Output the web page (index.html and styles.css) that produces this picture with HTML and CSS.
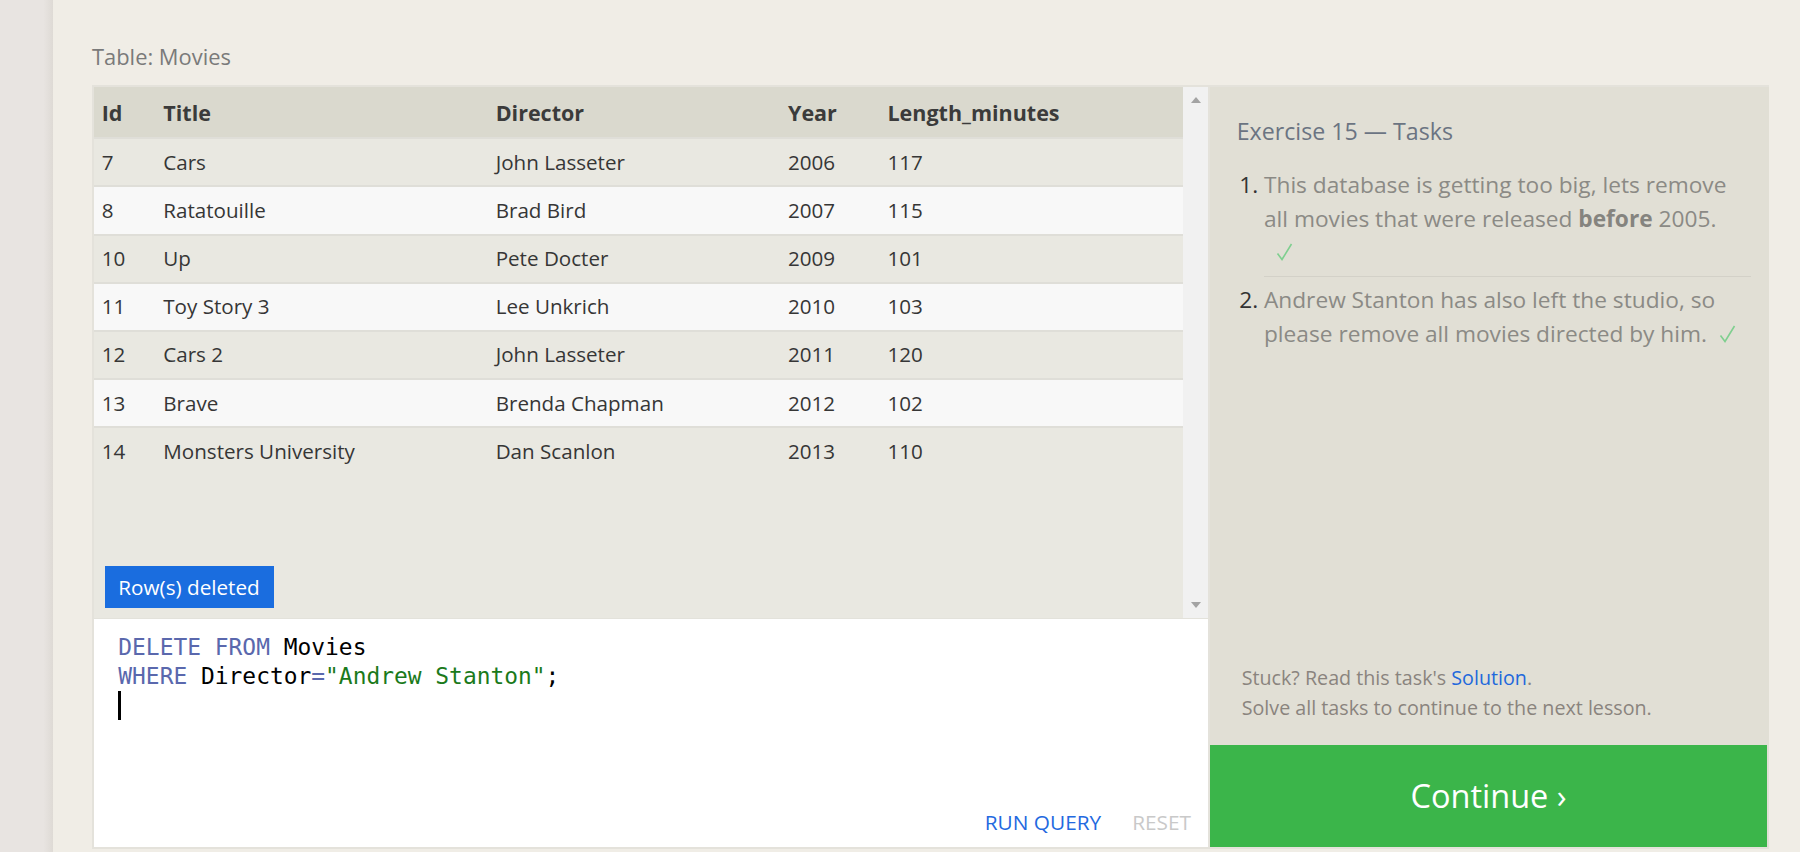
FILE: index.html
```html
<!DOCTYPE html>
<html lang="en">
<head>
<meta charset="utf-8">
<title>SQL Lesson — Exercise 15</title>
<link rel="stylesheet" href="styles.css">
</head>
<body>
  <div class="sidebar"></div>
  <main class="main">
    <div class="table-label">Table: Movies</div>
    <section class="workspace">
      <div class="left">
        <div class="results">
          <div class="results-body">
            <div class="grid">
              <div class="row head">
                <div class="cell">Id</div><div class="cell">Title</div><div class="cell">Director</div><div class="cell">Year</div><div class="cell">Length_minutes</div>
              </div>
              <div class="row odd">
                <div class="cell">7</div><div class="cell">Cars</div><div class="cell">John Lasseter</div><div class="cell">2006</div><div class="cell">117</div>
              </div>
              <div class="row even">
                <div class="cell">8</div><div class="cell">Ratatouille</div><div class="cell">Brad Bird</div><div class="cell">2007</div><div class="cell">115</div>
              </div>
              <div class="row odd">
                <div class="cell">10</div><div class="cell">Up</div><div class="cell">Pete Docter</div><div class="cell">2009</div><div class="cell">101</div>
              </div>
              <div class="row even">
                <div class="cell">11</div><div class="cell">Toy Story 3</div><div class="cell">Lee Unkrich</div><div class="cell">2010</div><div class="cell">103</div>
              </div>
              <div class="row odd">
                <div class="cell">12</div><div class="cell">Cars 2</div><div class="cell">John Lasseter</div><div class="cell">2011</div><div class="cell">120</div>
              </div>
              <div class="row even">
                <div class="cell">13</div><div class="cell">Brave</div><div class="cell">Brenda Chapman</div><div class="cell">2012</div><div class="cell">102</div>
              </div>
              <div class="row odd">
                <div class="cell">14</div><div class="cell">Monsters University</div><div class="cell">Dan Scanlon</div><div class="cell">2013</div><div class="cell">110</div>
              </div>
            </div>
            <div class="status">Row(s) deleted</div>
          </div>
          <div class="scrollbar">
            <span class="arrow up"></span>
            <span class="arrow down"></span>
          </div>
        </div>
        <div class="editor">
          <div class="code">
            <div class="line"><span class="kw">DELETE</span> <span class="kw">FROM</span> Movies</div>
            <div class="line"><span class="kw">WHERE</span> Director<span class="op">=</span><span class="str">"Andrew Stanton"</span>;</div>
            <div class="line"><span class="cursor"></span></div>
          </div>
          <div class="actions">
            <span class="run">RUN QUERY</span>
            <span class="reset">RESET</span>
          </div>
        </div>
      </div>
      <aside class="tasks">
        <div class="tasks-inner">
          <h2 class="tasks-title">Exercise 15 — Tasks</h2>
          <ol class="task-list">
            <li>This database is getting too big, lets remove all movies that were released <b>before</b>&nbsp;2005.<span class="check wrap"><svg width="17" height="18" viewBox="0 0 17 18"><polyline points="1.5,10.5 6,16.5 15.5,1" fill="none" stroke="#7fcf8f" stroke-width="1.6"/></svg></span></li>
            <li>Andrew Stanton has also left the studio, so please remove all movies directed by him.<span class="check"><svg width="17" height="18" viewBox="0 0 17 18"><polyline points="1.5,10.5 6,16.5 15.5,1" fill="none" stroke="#7fcf8f" stroke-width="1.6"/></svg></span></li>
          </ol>
        </div>
        <div class="stuck">
          <div>Stuck? Read this task's <span class="link">Solution</span>.</div>
          <div>Solve all tasks to continue to the next lesson.</div>
        </div>
        <div class="continue">Continue ›</div>
      </aside>
    </section>
  </main>
</body>
</html>
```

FILE: styles.css
```css
html, body {
  margin: 0;
  padding: 0;
}

body {
  display: flex;
  height: 852px;
  overflow: hidden;
  background: #f0ede6;
  font-family: "Open Sans", "Noto Sans", sans-serif;
  color: #3a3a3a;
}

.sidebar {
  flex: none;
  width: 53px;
  background: linear-gradient(to right, #e8e4e1 0, #e8e4e1 82%, #dedad5 100%);
}

.main {
  flex: 1;
  padding: 41.5px 31px 0 39px;
  min-width: 0;
}

.table-label {
  font-size: 21.9px;
  line-height: 30px;
  color: #7a7a7a;
  margin-bottom: 13.5px;
}

.workspace {
  display: flex;
  height: 764px;
  box-sizing: border-box;
  border: 2px solid #e4e2db;
  border-right: 0;
}

.left {
  flex: none;
  width: 1116px;
  box-sizing: border-box;
  border-right: 2px solid #e4e2db;
  display: flex;
  flex-direction: column;
}

.results {
  flex: none;
  height: 531.3px;
  display: flex;
}

.results-body {
  flex: 1;
  background: #e9e8e1;
  display: flex;
  flex-direction: column;
}

.row {
  display: grid;
  grid-template-columns: 61.6px 332.4px 292.3px 99.5px 1fr;
  align-items: center;
  box-sizing: border-box;
}

.cell {
  padding-left: 7.7px;
  white-space: nowrap;
}

.row.head {
  height: 50.3px;
  background: #dad9ce;
  font-weight: 700;
  font-size: 21.5px;
  color: #3b3b3b;
}

.row.odd,
.row.even {
  height: 48.2px;
  padding-bottom: 1.6px;
  border-top: 2px solid #dfded8;
  font-size: 20.6px;
  color: #363636;
}

.row.odd { background: #e9e8e1; }
.row.even { background: #f8f8f8; }

.status {
  margin-top: auto;
  margin-left: 11px;
  margin-bottom: 10.6px;
  align-self: flex-start;
  background: #1a6ddf;
  color: #fff;
  font-size: 20.7px;
  line-height: 28.2px;
  padding: 6.75px 14px 6.75px 13.3px;
}

.scrollbar {
  flex: none;
  width: 25px;
  background: #f1f1f1;
  display: flex;
  flex-direction: column;
  justify-content: space-between;
  align-items: center;
  padding: 10.3px 0 10.6px;
  box-sizing: border-box;
}

.arrow {
  width: 0;
  height: 0;
  border-left: 5.5px solid transparent;
  border-right: 5.5px solid transparent;
}

.arrow.up { border-bottom: 6px solid #a3a3a3; }
.arrow.down { border-top: 6px solid #a3a3a3; }

.editor {
  flex: 1;
  background: #fff;
  border-top: 1px solid #e3e2db;
  display: flex;
  flex-direction: column;
}

.code {
  padding: 13.3px 0 0 24.3px;
  font-family: "DejaVu Sans Mono", "Liberation Mono", monospace;
  font-size: 22.9px;
  line-height: 29px;
  color: #000;
}

.line {
  height: 29px;
  white-space: pre;
}

.kw { color: #5a68ad; }
.op { color: #5a68ad; }
.str { color: #1b7a1b; }

.cursor {
  display: inline-block;
  width: 2.6px;
  height: 29px;
  background: #000;
  vertical-align: top;
}

.actions {
  margin-top: auto;
  display: flex;
  justify-content: flex-end;
  gap: 31px;
  padding: 0 17px 11.3px 0;
  font-size: 20.8px;
}

.run { color: #2369e0; }
.reset { color: #c9c9c9; }

.tasks {
  flex: 1;
  background: #e1dfd5;
  display: flex;
  flex-direction: column;
}

.tasks-inner {
  padding: 28.9px 18px 0 26.7px;
}

.tasks-title {
  margin: 0;
  font-size: 23.2px;
  font-weight: 400;
  line-height: 31.6px;
  color: #6b7482;
}

.task-list {
  margin: 15px 0 0;
  padding-left: 27.3px;
  font-size: 22.7px;
  line-height: 33.3px;
  color: #8b8a85;
}

.task-list li {
  padding: 6px 0 8px;
}

.task-list li + li {
  border-top: 1px solid #d3d1c8;
}

.task-list li::marker {
  color: #333;
}

.task-list b {
  color: #85847f;
}

.check {
  display: inline-block;
  margin-left: 12px;
  vertical-align: baseline;
}

.check.wrap {
  display: block;
}

.check svg {
  display: inline-block;
  vertical-align: -1px;
}

.stuck {
  margin-top: auto;
  padding: 0 0 22px 31.7px;
  font-size: 19.7px;
  line-height: 29.7px;
  color: #8a847e;
}

.link { color: #2168dc; }

.continue {
  flex: none;
  height: 102.3px;
  margin-right: 2px;
  background: #3bb54a;
  color: #fff;
  font-size: 32.5px;
  display: flex;
  align-items: center;
  justify-content: center;
}
```
